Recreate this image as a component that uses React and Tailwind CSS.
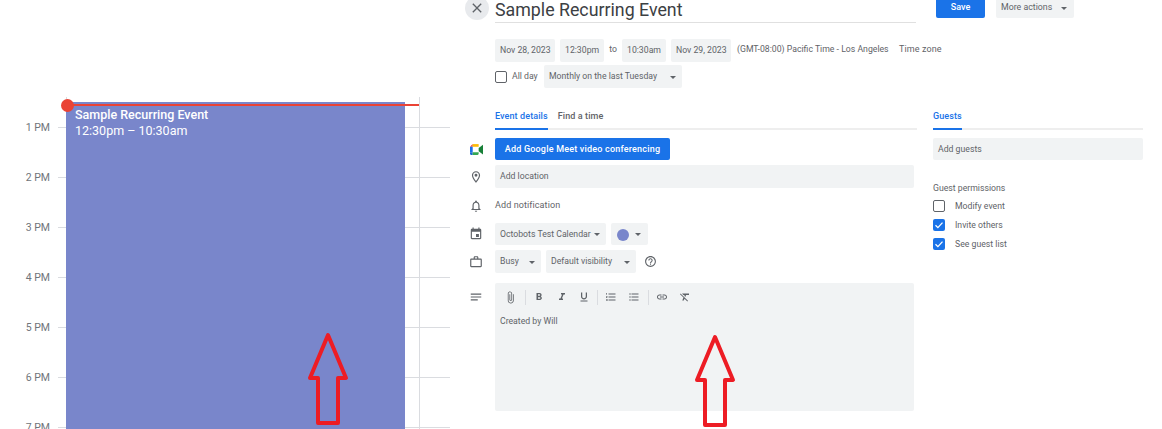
import React from 'react';

const P = {
  close: 'M19 6.41L17.59 5 12 10.59 6.41 5 5 6.41 10.59 12 5 17.59 6.41 19 12 13.41 17.59 19 19 17.59 13.41 12z',
  place: 'M12 2C8.13 2 5 5.13 5 9c0 5.25 7 13 7 13s7-7.75 7-13c0-3.87-3.13-7-7-7zM7 9c0-2.76 2.24-5 5-5s5 2.24 5 5c0 2.88-2.88 7.19-5 9.88C9.92 16.21 7 11.85 7 9zM12 6.5a2.5 2.5 0 100 5 2.5 2.5 0 000-5z',
  bell: 'M12 22c1.1 0 2-.9 2-2h-4c0 1.1.9 2 2 2zm6-6v-5c0-3.07-1.63-5.64-4.5-6.32V4c0-.83-.67-1.5-1.5-1.5s-1.5.67-1.5 1.5v.68C7.64 5.36 6 7.92 6 11v5l-2 2v1h16v-1l-2-2zm-2 1H8v-6c0-2.48 1.51-4.5 4-4.5s4 2.02 4 4.5v6z',
  event: 'M17 12h-5v5h5v-5zM16 1v2H8V1H6v2H5c-1.11 0-1.99.9-1.99 2L3 19c0 1.1.89 2 2 2h14c1.1 0 2-.9 2-2V5c0-1.1-.9-2-2-2h-1V1h-2zm3 18H5V8h14v11z',
  work: 'M20 6h-4V4c0-1.11-.89-2-2-2h-4c-1.11 0-2 .89-2 2v2H4c-1.11 0-1.99.89-1.99 2L2 19c0 1.11.89 2 2 2h16c1.11 0 2-.89 2-2V8c0-1.11-.89-2-2-2zm-6 0h-4V4h4v2zm6 13H4V8h16v11z',
  help: 'M11 18h2v-2h-2v2zm1-16C6.48 2 2 6.48 2 12s4.48 10 10 10 10-4.48 10-10S17.52 2 12 2zm0 18c-4.41 0-8-3.59-8-8s3.59-8 8-8 8 3.59 8 8-3.59 8-8 8zm0-14c-2.21 0-4 1.79-4 4h2c0-1.1.9-2 2-2s2 .9 2 2c0 2-3 1.75-3 5h2c0-2.25 3-2.5 3-5 0-2.21-1.79-4-4-4z',
  subject: 'M3 6h18v2H3zM3 11h18v2H3zM3 16h12v2H3z',
  attach: 'M16.5 6v11.5c0 2.21-1.79 4-4 4s-4-1.79-4-4V5c0-1.38 1.12-2.5 2.5-2.5s2.5 1.12 2.5 2.5v10.5c0 .55-.45 1-1 1s-1-.45-1-1V6H10v9.5c0 1.38 1.12 2.5 2.5 2.5s2.5-1.12 2.5-2.5V5c0-2.21-1.79-4-4-4S7 2.79 7 5v12.5c0 3.04 2.46 5.5 5.5 5.5s5.5-2.46 5.5-5.5V6h-1.5z',
  bold: 'M15.6 10.79c.97-.67 1.65-1.77 1.65-2.79 0-2.26-1.75-4-4-4H7v14h7.04c2.09 0 3.71-1.7 3.71-3.79 0-1.52-.86-2.82-2.15-3.42zM10 6.5h3c.83 0 1.5.67 1.5 1.5s-.67 1.5-1.5 1.5h-3v-3zm3.5 9H10v-3h3.5c.83 0 1.5.67 1.5 1.5s-.67 1.5-1.5 1.5z',
  italic: 'M10 4v3h2.21l-3.42 8H6v3h8v-3h-2.21l3.42-8H18V4z',
  underline: 'M12 17c3.31 0 6-2.69 6-6V3h-2.5v8c0 1.93-1.57 3.5-3.5 3.5S8.5 12.93 8.5 11V3H6v8c0 3.31 2.69 6 6 6zm-7 2v2h14v-2H5z',
  numbered: 'M2 17h2v.5H3v1h1v.5H2v1h3v-4H2v1zm1-9h1V4H2v1h1v3zm-1 3h1.8L2 13.1v.9h3v-1H3.2L5 10.9V10H2v1zm5-6v2h14V5H7zm0 14h14v-2H7v2zm0-6h14v-2H7v2z',
  bulleted: 'M4 10.5c-.83 0-1.5.67-1.5 1.5s.67 1.5 1.5 1.5 1.5-.67 1.5-1.5-.67-1.5-1.5-1.5zm0-6c-.83 0-1.5.67-1.5 1.5S3.17 7.5 4 7.5 5.5 6.83 5.5 6 4.83 4.5 4 4.5zm0 12c-.83 0-1.5.68-1.5 1.5s.68 1.5 1.5 1.5 1.5-.68 1.5-1.5-.67-1.5-1.5-1.5zM7 19h14v-2H7v2zm0-6h14v-2H7v2zm0-8v2h14V5H7z',
  link: 'M3.9 12c0-1.71 1.39-3.1 3.1-3.1h4V7H7c-2.76 0-5 2.24-5 5s2.24 5 5 5h4v-1.9H7c-1.71 0-3.1-1.39-3.1-3.1zM8 13h8v-2H8v2zm9-6h-4v1.9h4c1.71 0 3.1 1.39 3.1 3.1s-1.39 3.1-3.1 3.1h-4V17h4c2.76 0 5-2.24 5-5s-2.24-5-5-5z',
  clear: 'M3.27 5L2 6.27l6.97 6.97L6.5 19h3l1.57-3.66L16.73 21 18 19.73 3.55 5.27 3.27 5zM6 5v.18L8.82 8h2.4l-.72 1.68 2.1 2.1L14.21 8H20V5H6z',
};

const Icon = ({ d, className = 'w-[14px] h-[14px]' }) => (
  <svg viewBox="0 0 24 24" className={`${className} fill-[#5f6368] shrink-0`}>
    <path d={d} fillRule="evenodd" />
  </svg>
);

const Caret = ({ className = '' }) => (
  <span className={`w-0 h-0 border-x-[3px] border-x-transparent border-t-[3px] border-t-[#5f6368] shrink-0 ${className}`} />
);

const Chip = ({ children, className = '' }) => (
  <div className={`flex items-center whitespace-nowrap rounded-[2px] bg-[#f1f3f4] px-[5px] pt-px text-[8.7px] text-[#5f6368] ${className}`}>
    {children}
  </div>
);

const Row = ({ icon, className = '', children }) => (
  <div className={`flex ${className}`}>
    <div className="w-[30px] flex justify-start pl-[4px] items-center shrink-0">{icon}</div>
    {children}
  </div>
);

const MeetLogo = () => (
  <svg viewBox="0 0 24 20" className="w-[13px] h-[11px] shrink-0 ml-[1px]">
    <path d="M0 5L5 0v5z" fill="#ea4335" />
    <path d="M5 0h11v5H5z" fill="#fbbc04" />
    <path d="M0 5h5v10H0z" fill="#1a73e8" />
    <path d="M0 15h5v5H2a2 2 0 01-2-2z" fill="#1967d2" />
    <path d="M5 15h11v3a2 2 0 01-2 2H5z" fill="#34a853" />
    <path d="M16 7l8-6v18l-8-6z" fill="#188038" />
  </svg>
);

const Check = ({ checked }) =>
  checked ? (
    <span className="w-[12px] h-[12px] rounded-[2px] bg-[#1a73e8] flex items-center justify-center shrink-0">
      <svg viewBox="0 0 12 12" className="w-[12px] h-[12px]">
        <path d="M2.5 6.2l2.4 2.4 4.6-5" fill="none" stroke="#fff" strokeWidth="1.3" />
      </svg>
    </span>
  ) : (
    <span className="w-[12px] h-[12px] rounded-[2px] border-[1.5px] border-[#5f6368] shrink-0" />
  );

const Arrow = ({ className }) => (
  <svg viewBox="0 0 42 96" className={`absolute w-[42px] h-[96px] ${className}`}>
    <path d="M21 4L39 47H31V92H11V47H3Z" fill="none" stroke="#ed1c24" strokeWidth="4" strokeLinejoin="round" />
  </svg>
);

const hours = ['1 PM', '2 PM', '3 PM', '4 PM', '5 PM', '6 PM', '7 PM'];

const CalendarColumn = () => (
  <div className="relative w-[465px] shrink-0 pt-[97px]">
    <div className="h-[30px] ml-[66px] border-l border-[#dadce0] w-[354px] border-r" />
    {hours.map((h) => (
      <div key={h} className="flex h-[50px] relative">
        <span className="w-[50px] text-right text-[10.5px] leading-[14px] -mt-[6px] text-[#70757a]">{h}</span>
        <div className="ml-[8px] w-[392px] border-t border-[#dadce0] flex">
          <div className="w-[8px]" />
          <div className="w-[354px] border-r border-[#dadce0]" />
        </div>
      </div>
    ))}
    <div className="absolute left-[66px] top-[102px] w-[339px] h-[327px] bg-[#7986cb] rounded-tl-[2px] px-[9px] pt-[5px] text-white text-[12.5px] leading-[16px]">
      <div className="font-medium">Sample Recurring Event</div>
      <div>12:30pm – 10:30am</div>
    </div>
    <div className="absolute left-[66px] top-[104px] w-[353px] h-[2px] bg-[#ea4335]" />
    <div className="absolute left-[61px] top-[99px] w-[13px] h-[13px] rounded-full bg-[#ea4335]" />
  </div>
);

const tool = 'w-[12px] h-[12px]';

const Toolbar = () => (
  <div className="flex items-center h-[28px] pl-[9px]">
    <Icon d={P.attach} className="w-[13px] h-[13px]" />
    <span className="w-px h-[15px] bg-[#dadce0] ml-[8px] mr-[7px]" />
    <Icon d={P.bold} className={tool} />
    <span className="w-[10.5px]" />
    <Icon d={P.italic} className={tool} />
    <span className="w-[10.5px]" />
    <Icon d={P.underline} className={tool} />
    <span className="w-px h-[15px] bg-[#dadce0] ml-[7px] mr-[7px]" />
    <Icon d={P.numbered} className={tool} />
    <span className="w-[11px]" />
    <Icon d={P.bulleted} className={tool} />
    <span className="w-px h-[15px] bg-[#dadce0] ml-[8px] mr-[7px]" />
    <Icon d={P.link} className={tool} />
    <span className="w-[11px]" />
    <Icon d={P.clear} className={tool} />
  </div>
);

const FormColumn = () => (
  <div className="w-[697px] shrink-0 text-[#5f6368]">
    <div className="flex h-[23px] -mt-[4px]">
      <div className="w-[24px] h-[24px] rounded-full bg-[#e8eaed] flex items-center justify-center shrink-0">
        <Icon d={P.close} className="w-[16px] h-[16px]" />
      </div>
      <div className="ml-[6px] w-[421px] h-[27px] border-b border-[#e0e0e0] text-[#3c4043] text-[17.8px] leading-[27px] whitespace-nowrap">
        Sample Recurring Event
      </div>
      <div className="ml-[20px] w-[49px] h-[22px] pt-[2px] bg-[#1a73e8] rounded-[2px] text-white text-[9px] font-medium flex items-center justify-center">
        Save
      </div>
      <div className="ml-[11px] w-[78px] h-[22px] pt-[2px] bg-[#f1f3f4] rounded-[2px] text-[8.8px] flex items-center pl-[5px] whitespace-nowrap">
        More actions
        <Caret className="ml-[9px]" />
      </div>
    </div>

    <div className="flex items-center h-[23px] mt-[19px] ml-[30px] text-[8.7px] pt-px">
      <Chip className="h-[23px] w-[60px]">Nov 28, 2023</Chip>
      <Chip className="h-[23px] w-[44px] ml-[5px]">12:30pm</Chip>
      <span className="w-[18px] text-center">to</span>
      <Chip className="h-[23px] w-[44px]">10:30am</Chip>
      <Chip className="h-[23px] w-[60px] ml-[5px]">Nov 29, 2023</Chip>
      <span className="ml-[6px] w-[162px] whitespace-nowrap">(GMT-08:00) Pacific Time - Los Angeles</span>
      <span className="text-[9px] tracking-[0.1px]">Time zone</span>
    </div>

    <div className="flex items-center h-[23px] mt-[4px] ml-[30px] text-[8.7px]">
      <Check />
      <span className="ml-[5px] w-[32px]">All day</span>
      <Chip className="h-[23px] w-[138px] justify-between pr-[6px] ml-0">
        Monthly on the last Tuesday
        <Caret />
      </Chip>
    </div>

    <div className="flex mt-[18px] h-[24px]">
      <div className="ml-[30px] w-[422px] border-b-2 border-[#eeeeee] flex text-[9px] tracking-[0.1px] font-medium relative leading-[20px]">
        <span className="text-[#1a73e8] relative">
          Event details
          <span className="absolute left-0 right-0 top-[22px] h-[2px] bg-[#1a73e8]" />
        </span>
        <span className="ml-[10px]">Find a time</span>
      </div>
      <div className="ml-[16px] w-[210px] border-b-2 border-[#eeeeee] text-[9px] tracking-[0.1px] font-medium leading-[20px]">
        <span className="text-[#1a73e8] relative inline-block h-[24px]">
          Guests
          <span className="absolute left-0 right-0 top-[22px] h-[2px] bg-[#1a73e8]" />
        </span>
      </div>
    </div>

    <div className="flex mt-[8px]">
      <div className="w-[449px] shrink-0">
        <Row icon={<MeetLogo />} className="h-[22px]">
          <div className="w-[175px] pt-px bg-[#1a73e8] rounded-[2px] text-white text-[9px] tracking-[0.2px] font-medium flex items-center justify-center whitespace-nowrap">
            Add Google Meet video conferencing
          </div>
        </Row>
        <Row icon={<Icon d={P.place} />} className="h-[23px] mt-[5px]">
          <Chip className="w-[419px]">Add location</Chip>
        </Row>
        <Row icon={<Icon d={P.bell} />} className="h-[23px] mt-[6px] items-center">
          <span className="text-[9px] tracking-[0.1px]">Add notification</span>
        </Row>
        <Row icon={<Icon d={P.event} />} className="h-[22px] mt-[6px]">
          <Chip className="w-[111px] justify-between pr-[6px]">
            Octobots Test Calendar
            <Caret />
          </Chip>
          <Chip className="w-[37px] ml-[5px] pl-[6px]">
            <span className="w-[12px] h-[12px] rounded-full bg-[#7986cb]" />
            <Caret className="ml-[6px]" />
          </Chip>
        </Row>
        <Row icon={<Icon d={P.work} />} className="h-[23px] mt-[5px]">
          <Chip className="w-[46px] justify-between pr-[6px]">
            Busy
            <Caret />
          </Chip>
          <Chip className="w-[90px] ml-[5px] justify-between pr-[6px]">
            Default visibility
            <Caret />
          </Chip>
          <div className="ml-[8px] flex items-center">
            <Icon d={P.help} className="w-[13px] h-[13px]" />
          </div>
        </Row>
        <div className="flex mt-[10px]">
          <div className="w-[30px] h-[28px] flex items-center pl-[4px] shrink-0">
            <Icon d={P.subject} />
          </div>
          <div className="w-[419px] h-[128px] bg-[#f1f3f4] rounded-[2px]">
            <Toolbar />
            <div className="pl-[5px] pt-[3px] text-[8.7px] leading-[14px]">Created by Will</div>
          </div>
        </div>
      </div>

      <div className="ml-[19px] w-[210px] text-[8.7px]">
        <div className="h-[22px] pt-[2px] bg-[#f1f3f4] rounded-[2px] flex items-center pl-[5px]">Add guests</div>
        <div className="mt-[21px] leading-[14px]">Guest permissions</div>
        {[['Modify event', false], ['Invite others', true], ['See guest list', true]].map(([label, on], i) => (
          <div key={label} className={`flex items-center h-[12px] ${i === 0 ? 'mt-[5px]' : 'mt-[7px]'}`}>
            <Check checked={on} />
            <span className="ml-[10px] pt-px">{label}</span>
          </div>
        ))}
      </div>
    </div>
  </div>
);

export default function App() {
  return (
    <div className="relative w-[1162px] h-[429px] overflow-hidden bg-white flex font-['Roboto',sans-serif]">
      <CalendarColumn />
      <FormColumn />
      <Arrow className="left-[307px] top-[331px]" />
      <Arrow className="left-[694px] top-[333px]" />
    </div>
  );
}
